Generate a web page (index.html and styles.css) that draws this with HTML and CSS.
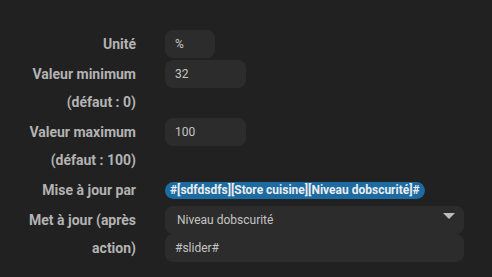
FILE: index.html
```html
<!DOCTYPE html>
<html lang="fr">
<head>
    <meta charset="UTF-8">
    <title>Options du slider</title>
    <link rel="stylesheet" href="styles.css">
</head>
<body>
    <form class="options-form">
        <label class="form-label">Unité</label>
        <div class="form-field">
            <input type="text" class="field-input input-xs" value="%">
        </div>

        <label class="form-label">Valeur minimum (défaut : 0)</label>
        <div class="form-field">
            <input type="text" class="field-input input-sm" value="32">
        </div>

        <label class="form-label">Valeur maximum (défaut : 100)</label>
        <div class="form-field">
            <input type="text" class="field-input input-sm" value="100">
        </div>

        <label class="form-label">Mise à jour par</label>
        <div class="form-field">
            <span class="cmd-tag">#[sdfdsdfs][Store cuisine][Niveau dobscurité]#</span>
        </div>

        <label class="form-label">Met à jour (après action)</label>
        <div class="form-field stacked">
            <div class="field-select">
                <span>Niveau dobscurité</span>
                <span class="caret"></span>
            </div>
            <input type="text" class="field-input input-full" value="#slider#">
        </div>
    </form>
</body>
</html>
```

FILE: styles.css
```css
body {
    margin: 0;
    padding: 30px 0 0 0;
    background-color: #212121;
    font-family: Roboto, "Liberation Sans", sans-serif;
    height: 100vh;
    box-sizing: border-box;
}

.options-form {
    display: grid;
    grid-template-columns: 136px 299px;
    column-gap: 29px;
    row-gap: 2px;
}

.form-label {
    text-align: right;
    font-size: 14px;
    font-weight: bold;
    line-height: 28px;
    color: #b3b3b3;
}

.form-field {
    display: flex;
    align-items: flex-start;
}

.form-field.stacked {
    flex-direction: column;
}

.field-input {
    height: 28px;
    box-sizing: border-box;
    padding: 0 10px;
    border: none;
    border-radius: 8px;
    background-color: #2c2c2c;
    color: #c4c4c4;
    font-family: Roboto, "Liberation Sans", sans-serif;
    font-size: 12px;
    outline: none;
}

.input-xs {
    width: 50px;
}

.input-sm {
    width: 81px;
}

.input-full {
    width: 299px;
}

.cmd-tag {
    margin-top: 6px;
    height: 17px;
    line-height: 17px;
    padding: 0 5px;
    border-radius: 9px;
    background-color: #1d6ba3;
    color: #ededed;
    font-size: 12px;
    font-weight: bold;
    white-space: nowrap;
}

.field-select {
    width: 299px;
    height: 28px;
    box-sizing: border-box;
    padding: 0 12px;
    border-radius: 8px;
    background-color: #2c2c2c;
    color: #c4c4c4;
    font-size: 12px;
    display: flex;
    align-items: center;
    justify-content: space-between;
}

.caret {
    width: 0;
    height: 0;
    margin-top: -8px;
    margin-right: -3px;
    border-left: 6px solid transparent;
    border-right: 6px solid transparent;
    border-top: 6px solid #bdbdbd;
}
```
